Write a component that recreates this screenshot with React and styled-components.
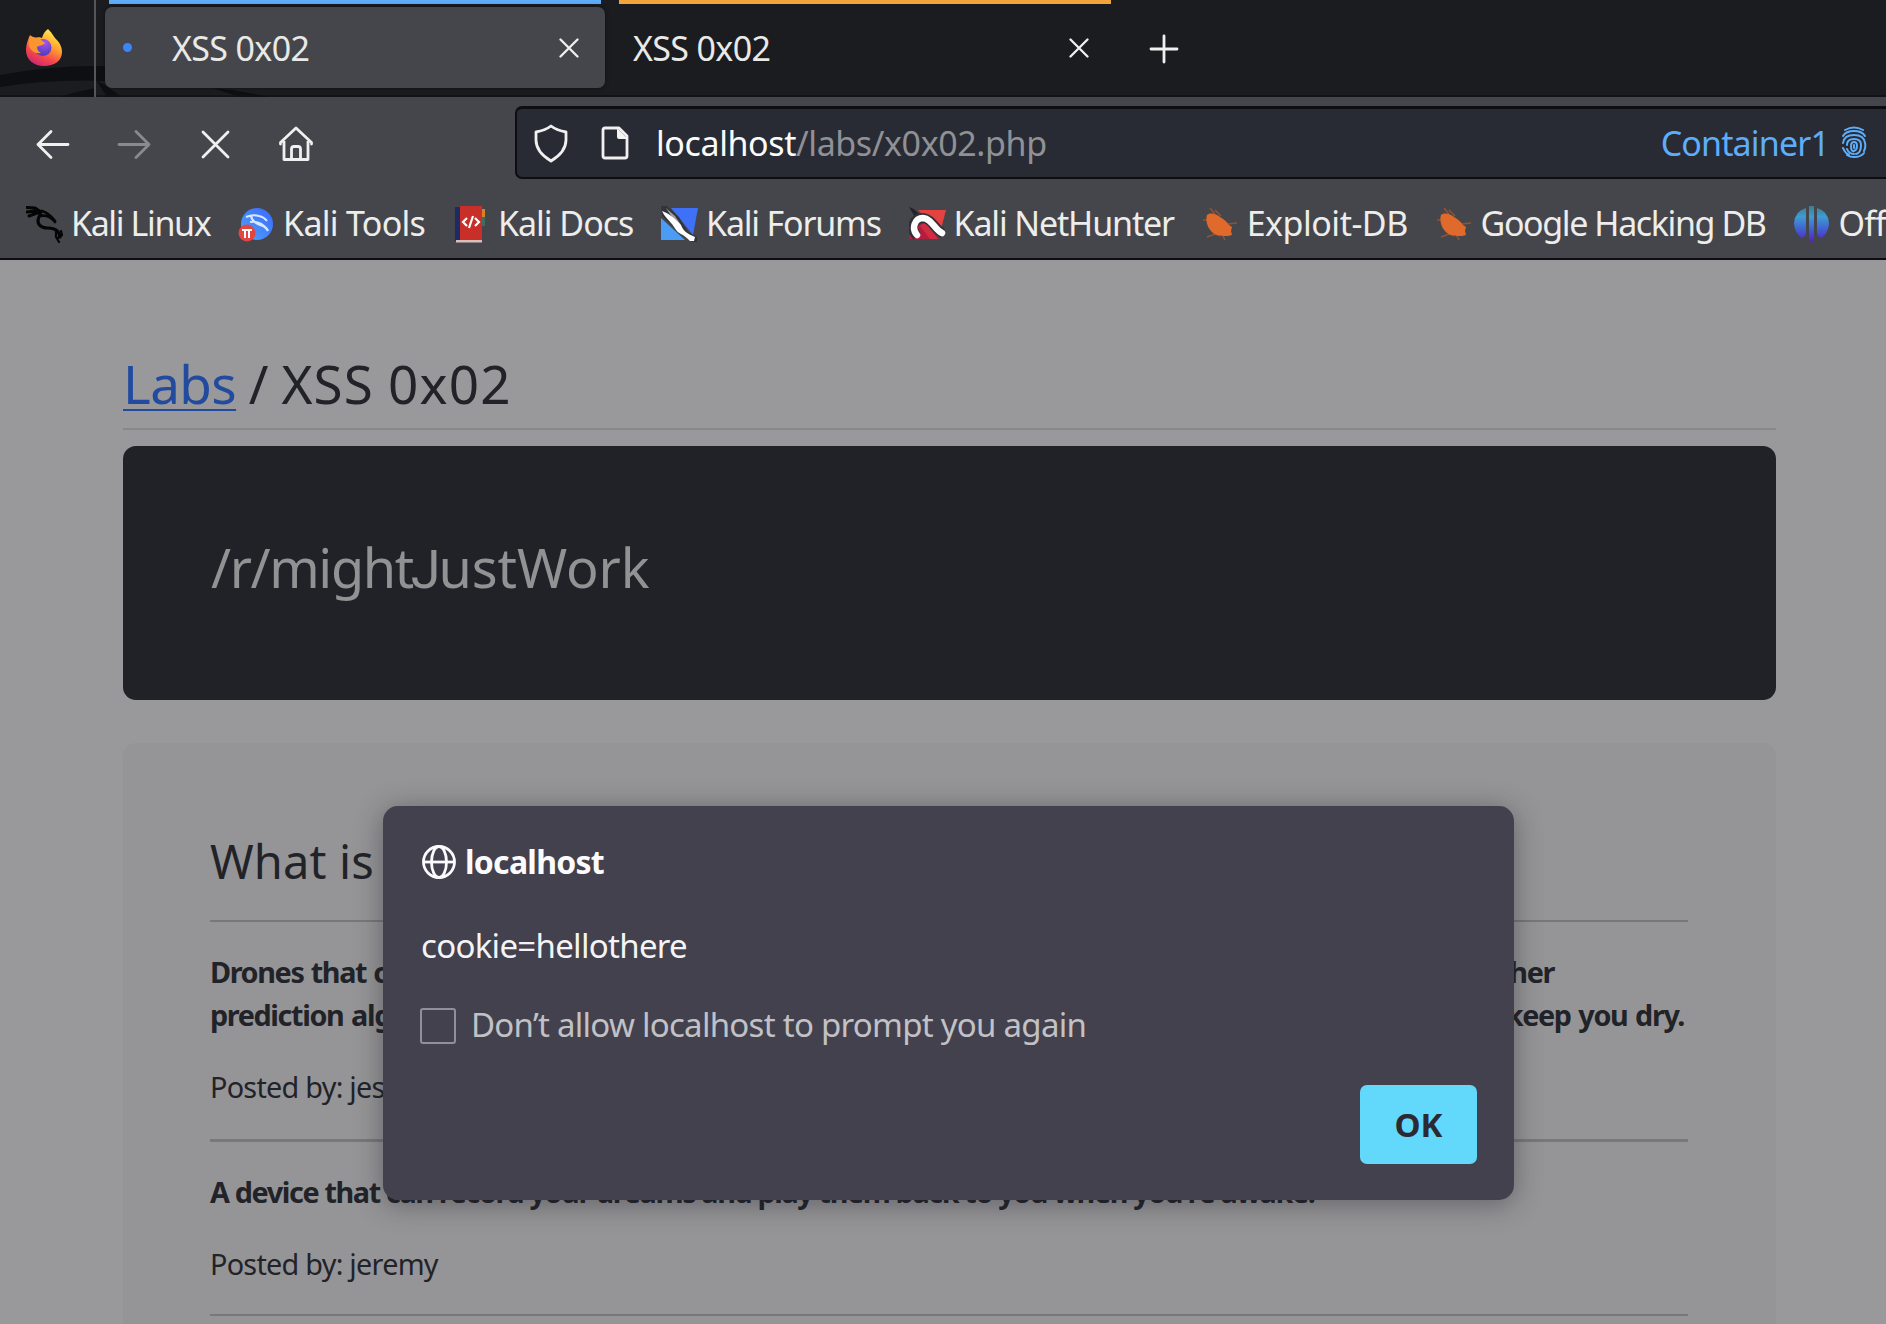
import React from 'react';
import styled, { createGlobalStyle } from 'styled-components';

const Global = createGlobalStyle`
  * { box-sizing: border-box; }
  html, body { margin: 0; height: 1324px; overflow: hidden; background: #99999b; }
  body { font-family: "Noto Sans", sans-serif; }
`;

const Window = styled.div`
  width: 1886px;
  height: 1324px;
  overflow: hidden;
  display: flex;
  flex-direction: column;
`;

const TabStrip = styled.div`
  height: 97px;
  flex: none;
  display: flex;
  position: relative;
  isolation: isolate;
  background: #1b1c20;
  border-bottom: 2px solid #121317;
`;

const ThemeArt = styled.svg`
  position: absolute;
  left: 0;
  top: 0;
  z-index: -1;
`;

const HomeSlot = styled.div`
  width: 96px;
  height: 97px;
  padding: 28px 0 0 24px;
  border-right: 2px solid #55565a;
`;

const TabSlot = styled.div`
  width: ${(p) => p.$width}px;
  margin-left: ${(p) => p.$left}px;
  display: flex;
  flex-direction: column;
`;

const TabLine = styled.div`
  height: 4px;
  width: 492px;
  margin: 0 0 3px 4px;
  background: ${(p) => p.$color};
`;

const Tab = styled.div`
  height: 81px;
  display: flex;
  align-items: center;
  padding: 0 26px 0 18px;
  border-radius: 7px;
  background: ${(p) => (p.$active ? '#45464b' : 'transparent')};
  box-shadow: ${(p) => (p.$active ? '0 0 5px rgba(0, 0, 0, 0.45)' : 'none')};
`;

const LoadingDot = styled.span`
  width: 9px;
  height: 9px;
  border-radius: 50%;
  background: #3d84f7;
  margin-right: 40px;
`;

const TabTitle = styled.span`
  flex: 1;
  font-size: 34px;
  line-height: 46px;
  letter-spacing: -0.65px;
  color: #e9e9e7;
`;

const NewTab = styled.div`
  padding: 34px 0 0 34px;
`;

const NavBar = styled.div`
  height: 93px;
  flex: none;
  display: flex;
  align-items: flex-start;
  background: #45464b;
`;

const NavButtons = styled.div`
  width: 515px;
  height: 93px;
  padding: 27px 0 0 33px;
  display: flex;
  gap: 41px;
`;

const UrlBar = styled.div`
  flex: 1;
  height: 73px;
  margin-top: 9px;
  display: flex;
  align-items: center;
  padding: 0 19px 0 16px;
  background: #282b33;
  border: 2px solid #0d0e12;
  border-top-width: 3px;
  border-right: 0;
  border-radius: 7px 0 0 7px;
`;

const PageInfo = styled.span`
  margin: 0 26px 0 31px;
`;

const Url = styled.span`
  flex: 1;
  font-size: 34px;
  letter-spacing: -0.4px;
  color: #909196;
  b { font-weight: 400; color: #fbfbfb; }
`;

const Container = styled.span`
  font-size: 34px;
  letter-spacing: -0.85px;
  margin-right: 12px;
  color: #5eadfa;
`;

const Bookmarks = styled.div`
  height: 70px;
  flex: none;
  display: flex;
  align-items: flex-start;
  padding: 12px 0 0 26px;
  gap: 27.8px;
  overflow: hidden;
  background: #45464b;
  border-bottom: 2px solid #0d0e12;
`;

const Bookmark = styled.div`
  display: flex;
  align-items: center;
  gap: 8px;
  flex: none;
  height: 45px;
  font-size: 34px;
  line-height: 44px;
  letter-spacing: ${(p) => p.$track}px;
  white-space: nowrap;
  color: #ededeb;
`;

const BookmarkName = styled.span`
  margin-top: -3px;
`;

const Page = styled.main`
  flex: 1;
  padding: 93px 110px 0 123px;
  background: #99999b;
  color: #222328;
  overflow: hidden;
`;

const Heading = styled.h1`
  margin: 0 0 16px;
  height: 77px;
  border-bottom: 2px solid #88888a;
  font-weight: 400;
  font-size: 53px;
  line-height: 62px;
  word-spacing: -1px;
  a {
    color: #224b9f;
    letter-spacing: -0.6px;
    text-decoration: underline;
    text-decoration-thickness: 2px;
    text-underline-offset: 5px;
  }
  span { letter-spacing: 1.15px; }
`;

const Banner = styled.section`
  height: 254px;
  padding: 85px 88px;
  border-radius: 13px;
  background: #212227;
  color: #929294;
  font-size: 54px;
  line-height: 72px;
`;

const Tracked = styled.span`
  letter-spacing: ${(p) => p.$by}px;
`;

const PlainJ = styled.span`
  font-family: Roboto, sans-serif;
  font-weight: 400;
  margin: 0 -2px 0 -2px;
`;

const Card = styled.section`
  height: 700px;
  margin-top: 43px;
  padding: 86px 88px 0 87px;
  border-radius: 13px;
  background: #959597;
`;

const CardTitle = styled.h2`
  margin: 0;
  font-weight: 400;
  font-size: 47px;
  line-height: 65px;
  letter-spacing: 0.15px;
`;

const Rule = styled.div`
  height: ${(p) => p.$thick || 2}px;
  background: #78787a;
  margin-top: ${(p) => p.$top}px;
`;

const Post = styled.p`
  margin: ${(p) => p.$top}px 0 0;
  font-size: 28.8px;
  line-height: 43.2px;
  white-space: nowrap;
  font-weight: ${(p) => (p.$strong ? 700 : 400)};
  letter-spacing: ${(p) => (p.$strong ? -1.38 : -0.74)}px;
`;

const PostLine = styled.span`
  display: block;
  width: ${(p) => p.$width}px;
  text-align: justify;
  text-align-last: justify;
  white-space: normal;
  height: 43.2px;
`;

const Dialog = styled.div`
  position: absolute;
  left: 383px;
  top: 806px;
  width: 1131px;
  height: 394px;
  padding: 33px 37px 36px;
  display: flex;
  flex-direction: column;
  border-radius: 15px;
  background: #42414d;
  box-shadow: 0 4px 28px rgba(30, 30, 40, 0.42);
`;

const DialogHead = styled.div`
  display: flex;
  align-items: center;
  gap: 9px;
  height: 46px;
  padding-left: 2px;
  font-size: 32px;
  line-height: 44px;
  font-weight: 700;
  letter-spacing: -0.72px;
  color: #fbfbfe;
  span { margin-top: -1px; }
`;

const Message = styled.div`
  margin: 38px 0 0 1px;
  height: 46px;
  line-height: 46px;
  font-size: 33px;
  letter-spacing: -0.7px;
  color: #f4f4f6;
`;

const CheckRow = styled.label`
  margin-top: 34px;
  height: 46px;
  display: flex;
  align-items: center;
  gap: 15px;
  font-size: 33px;
  line-height: 44px;
  letter-spacing: -0.73px;
  color: #c2c1c6;
`;

const CheckText = styled.span`
  margin-top: -3px;
`;

const Box = styled.span`
  width: 36px;
  height: 36px;
  border: 2px solid #8f8f9d;
  border-radius: 3px;
`;

const Ok = styled.button`
  margin-top: auto;
  align-self: flex-end;
  width: 117px;
  height: 79px;
  padding: 0 0 1px;
  border: 0;
  border-radius: 7px;
  background: #62d9fb;
  color: #2b2a33;
  font: 700 33px "Noto Sans", sans-serif;
`;

const Svg = styled.svg`
  display: block;
  flex: none;
`;

const line = { fill: 'none', stroke: '#f0f0f0', strokeWidth: 2.8, strokeLinecap: 'round', strokeLinejoin: 'round' };

const Firefox = () => (
  <Svg width="40" height="40" viewBox="0 0 40 40">
    <defs>
      <linearGradient id="fx" x1="0.8" y1="0" x2="0.3" y2="1">
        <stop offset="0" stopColor="#fff45a" />
        <stop offset="0.4" stopColor="#ffa52f" />
        <stop offset="0.72" stopColor="#f5494c" />
        <stop offset="1" stopColor="#d0256f" />
      </linearGradient>
      <radialGradient id="fp" cx="0.6" cy="0.2" r="0.8">
        <stop offset="0" stopColor="#a955ee" />
        <stop offset="1" stopColor="#4a3bbd" />
      </radialGradient>
    </defs>
    <path fill="url(#fx)" d="M24 1c4 4 5 6 7 9 4 4 7 8 7 14 0 9-8 14-18 14S2 32 2 22c0-6 2-10 4-15l4 4c3-2 6-2 8-1 1-4 3-7 6-9z" />
    <circle cx="19" cy="19.500" r="8.500" fill="url(#fp)" />
    <path fill="#f9962f" d="M7 8c3 2 7 1 9 3l5 4c-2 3-6 2-8 4 0 3 2 5 4 6-6 1-10-2-12-7-1-4 1-7 2-10z" />
  </Svg>
);

const Cross = () => (
  <Svg width="20" height="20" viewBox="0 0 20 20">
    <path {...line} strokeWidth="2.3" d="M1.500 1.500l17 17M18.500 1.500l-17 17" />
  </Svg>
);

const Arrow = ({ flip }) => (
  <Svg width="40" height="40" viewBox="0 0 40 40" opacity={flip ? 0.4 : 1}>
    <path {...line} transform={flip ? 'matrix(-1 0 0 1 40 0)' : undefined} d="M35 20.500H5M18 7.500l-13 13 13 13" />
  </Svg>
);

const Home = () => (
  <Svg width="40" height="40" viewBox="0 0 40 40">
    <path {...line} d="M4.500 20v-1.500L20 4l15.500 14.500V20M8 17v18.500h24V17M15.500 35V25q0-2.500 2.500-2.500h4q2.500 0 2.500 2.500v10" />
  </Svg>
);

const Shield = () => (
  <Svg width="36" height="40" viewBox="0 0 36 40">
    <path {...line} d="M18 3c4 3 9 5 15 6v8c0 8-5 15-15 21C8 32 3 25 3 17V9c6-1 11-3 15-6z" />
  </Svg>
);

const Doc = () => (
  <Svg width="30" height="36" viewBox="0 0 30 36">
    <path {...line} d="M5 3h14l8 8v20q0 2-2 2H5q-2 0-2-2V5q0-2 2-2z" />
    <path fill="#f3f3f3" d="M17 3l11 11H19q-2 0-2-2z" />
  </Svg>
);

const Finger = () => (
  <Svg width="26" height="34" viewBox="0 0 26 34">
    <g fill="none" stroke="#5eadfa" strokeWidth="2" strokeLinecap="round">
      <path d="M4 4q9-5 18 0M2 10q3-5 11-5t11 5M2 17q1-8 11-8t11 8q1 4-1 8M2 22q2 5 6 7M6 19q0-6 7-6t7 6q0 8-5 9M6 23q2 5 7 5M10 20q0-4 3-4t3 4-3 5-3-5zM13 19v3M23 27q-3 4-10 4-4 0-7-2" />
    </g>
  </Svg>
);

const Globe = () => (
  <Svg width="34" height="34" viewBox="0 0 34 34">
    <g fill="none" stroke="#fbfbfe" strokeWidth="2.8">
      <circle cx="17" cy="17" r="15.5" />
      <ellipse cx="17" cy="17" rx="7.5" ry="15.5" />
      <path d="M2 17h30" />
    </g>
  </Svg>
);

const Dragon = () => (
  <Svg width="37" height="37" viewBox="0 0 37 37">
    <g fill="none" stroke="#050506" strokeWidth="2.2" strokeLinecap="round">
      <path d="M1 1.500l8 .5 6 4M1 6l8-1M3 10l8-3M9 3l6 6" strokeWidth="3" />
      <path d="M14 10q9-2 15 6M16 5q7 2 13 10" strokeWidth="2.8" />
      <path d="M14 9c-5 8 0 13 8 13 6 0 11 2 12 9" strokeWidth="3.2" />
      <path d="M30 26l0 5 3 5M35 25l1 4-4 3" />
    </g>
  </Svg>
);

const Tools = () => (
  <Svg width="37" height="37" viewBox="0 0 37 37">
    <defs>
      <linearGradient id="kt" x1="1" y1="0" x2="0" y2="1">
        <stop offset="0" stopColor="#3a68fb" />
        <stop offset="1" stopColor="#4fa3f8" />
      </linearGradient>
    </defs>
    <circle cx="19" cy="18" r="16" fill="url(#kt)" />
    <g fill="none" stroke="#d9e8ff" strokeWidth="2">
      <path d="M8 11q7-3 13-1 5 1 8 5M12 16q10-2 18 8M13 10q1 6 9 9 5 1 8 6" />
    </g>
    <circle cx="9" cy="27" r="8.5" fill="#e5453f" />
    <path d="M4 24h10M7 24v8M11 24v8" stroke="#fff" strokeWidth="2" />
  </Svg>
);

const Docs = () => (
  <Svg width="37" height="37" viewBox="0 0 37 37">
    <path fill="#d48428" d="M28 3h4v8h-4z" />
    <path fill="#3b6e62" d="M28 11h4v9h-4z" />
    <path fill="#1d2a63" d="M2 1h6v34H2z" />
    <path fill="#c72f28" d="M7 0h22v34H7z" />
    <path fill="#d9bcbc" d="M3 34h26v2.500H3z" />
    <path fill="none" stroke="#fff" strokeWidth="2.200" d="M14 12l-4 4 4 4M22 12l4 4-4 4M20 10l-4 12" />
  </Svg>
);

const Forums = () => (
  <Svg width="37" height="37" viewBox="0 0 37 37">
    <path fill="#3f70f8" d="M10 2h27l-5 27z" />
    <path fill="#4a9cf5" d="M0 12l24 22H0z" />
    <path fill="#33343a" d="M0 0h6l12 11 9 15 9 5v5h-5l-10-8L1 10z" />
    <path fill="#9d9d9f" d="M5 2l9 8 6 9-8-6z" />
    <path fill="#fff" d="M1 5c6 2 13 7 19 14 2 6 7 9 14 12l-1 4h-4c-3-3-5-5-9-7-5-2-6-7-10-11C7 13 3 10 1 5z" />
  </Svg>
);

const NetHunter = () => (
  <Svg width="37" height="37" viewBox="0 0 37 37">
    <path fill="#e5433f" d="M9 4h28l-6 23z" />
    <path fill="#b41c40" d="M0 25l16-9 14 17H0z" />
    <path fill="#222328" d="M0 1l5 2 6 6-5 2z" />
    <path fill="none" stroke="#303138" strokeWidth="10" d="M8 30C0 22 5 12 14 12c9 1 12 12 20 15" />
    <path fill="none" stroke="#fff" strokeWidth="6.500" strokeLinecap="round" d="M8 29C2 22 6 12 14 12c9 1 11 11 19 15" />
    <path fill="#d02c42" d="M11 20q4-5 8 0l10 13h-8z" />
  </Svg>
);

const Bug = () => (
  <Svg width="37" height="37" viewBox="0 0 37 37">
    <path fill="none" stroke="#b0592f" strokeWidth="1.500" d="M8 2l5 6M1 14h9M5 31l8-3 6 2M23 34l-3-6M35 17l-9 1M13 4l6 6" opacity="0.7" />
    <path fill="#df6a2b" d="M5 9c4-3 9-1 13 2 4 2 7 5 9 8l3 2-1 4 1 4-4 1c-5 0-11 0-15-3-5-4-8-12-6-18z" />
  </Svg>
);

const OffSec = () => (
  <Svg width="37" height="37" viewBox="0 0 37 37">
    <defs>
      <linearGradient id="os" gradientUnits="userSpaceOnUse" x1="0" y1="0" x2="0" y2="36">
        <stop offset="0" stopColor="#3d7e8c" />
        <stop offset="0.3" stopColor="#3f9bd4" />
        <stop offset="0.7" stopColor="#4257cf" />
        <stop offset="1" stopColor="#5a1fc0" />
      </linearGradient>
    </defs>
    <path fill="url(#os)" d="M16 0h5v36h-5zM13 2v25q-1 5-5 5Q1 25 1 17 2 5 13 2zM24 2v25q1 5 5 5 7-7 7-15-1-12-12-15z" />
  </Svg>
);

const bookmarks = [
  { name: 'Kali Linux', icon: Dragon, track: -1.38 },
  { name: 'Kali Tools', icon: Tools, track: -0.72 },
  { name: 'Kali Docs', icon: Docs, track: -1.02 },
  { name: 'Kali Forums', icon: Forums, track: -1.2 },
  { name: 'Kali NetHunter', icon: NetHunter, track: -1.15 },
  { name: 'Exploit-DB', icon: Bug, track: -0.5 },
  { name: 'Google Hacking DB', icon: Bug, track: -1.4 },
  { name: 'OffSec', icon: OffSec, track: -0.8 },
];

export default function App() {
  return (
    <Window>
      <Global />
      <TabStrip>
        <ThemeArt width="300" height="97" viewBox="0 0 300 97" fill="#0e0f12">
          <path d="M0 75Q48 66 95 66h12v15Q50 79 0 87zM60 97q18-6 36-9v9zM96 80l10 6 16 11h-15zM213 88q28 2 55 9h-28z" />
        </ThemeArt>
        <HomeSlot><Firefox /></HomeSlot>
        <TabSlot $width={500} $left={9}>
          <TabLine $color="#5eadfa" />
          <Tab $active>
            <LoadingDot />
            <TabTitle>XSS 0x02</TabTitle>
            <Cross />
          </Tab>
        </TabSlot>
        <TabSlot $width={500} $left={10}>
          <TabLine $color="#f4a53a" />
          <Tab>
            <TabTitle>XSS 0x02</TabTitle>
            <Cross />
          </Tab>
        </TabSlot>
        <NewTab>
          <Svg width="30" height="30" viewBox="0 0 30 30"><path {...line} d="M15 2v26M2 15h26" /></Svg>
        </NewTab>
      </TabStrip>
      <NavBar>
        <NavButtons>
          <Arrow />
          <Arrow flip />
          <Svg width="40" height="40" viewBox="0 0 40 40"><path {...line} d="M8 8l25 25M33 8L8 33" /></Svg>
          <Home />
        </NavButtons>
        <UrlBar>
          <Shield />
          <PageInfo><Doc /></PageInfo>
          <Url><b>localhost</b>/labs/x0x02.php</Url>
          <Container>Container1</Container>
          <Finger />
        </UrlBar>
      </NavBar>
      <Bookmarks>
        {bookmarks.map(({ name, icon: Icon, track }) => (
          <Bookmark key={name} $track={track}>
            <Icon />
            <BookmarkName>{name}</BookmarkName>
          </Bookmark>
        ))}
      </Bookmarks>
      <Page>
        <Heading><a>Labs</a> / <span>XSS 0x02</span></Heading>
        <Banner>
          <Tracked $by={-1.4}>/r/might</Tracked><PlainJ>J</PlainJ><Tracked $by={-0.1}>ustWork</Tracked>
        </Banner>
        <Card>
          <CardTitle>What is your million dollar idea?</CardTitle>
          <Rule $top={26} />
          <Post $strong $top={28}>
            <PostLine $width={1344}>Drones that can follow you around and serve as your own personal umbrella, using advanced weather</PostLine>
            <PostLine $width={1474}>prediction algorithms to anticipate precisely when it will rain, then fly directly above your head to keep you dry.</PostLine>
          </Post>
          <Post $top={29}>Posted by: jessamy</Post>
          <Rule $top={30} $thick={3} />
          <Post $strong $top={28}>A device that can record your dreams and play them back to you when you're awake.</Post>
          <Post $top={29}>Posted by: jeremy</Post>
          <Rule $top={29} />
        </Card>
      </Page>
      <Dialog>
        <DialogHead><Globe /><span>localhost</span></DialogHead>
        <Message>cookie=hellothere</Message>
        <CheckRow><Box /><CheckText>Don’t allow localhost to prompt you again</CheckText></CheckRow>
        <Ok>OK</Ok>
      </Dialog>
    </Window>
  );
}
